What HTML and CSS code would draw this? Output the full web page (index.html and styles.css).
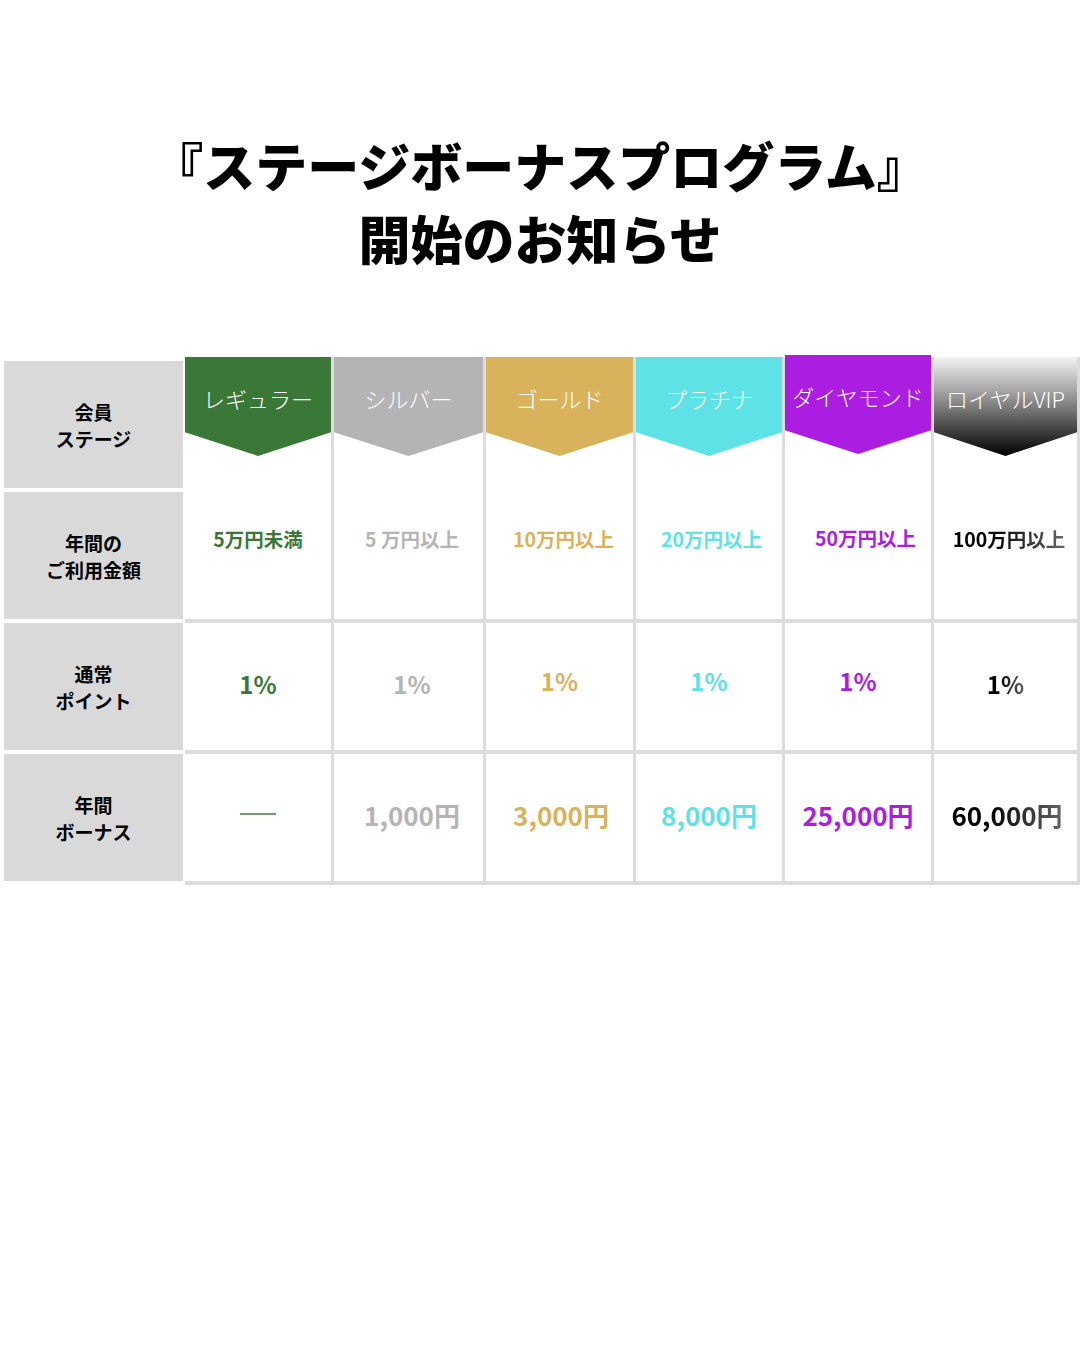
FILE: index.html
```html
<!DOCTYPE html>
<html lang="ja">
<head>
<meta charset="utf-8">
<title>ステージボーナスプログラム</title>
<link rel="stylesheet" href="styles.css">
</head>
<body>
<main class="page">
  <h1 class="title">『ステージボーナスプログラム』<br>開始のお知らせ</h1>
  <section class="table">
    <div class="labels">
      <div class="label">会員<br>ステージ</div>
      <div class="label">年間の<br>ご利用金額</div>
      <div class="label">通常<br>ポイント</div>
      <div class="label">年間<br>ボーナス</div>
    </div>
    <div class="col regular">
      <div class="head">
        <div class="banner">レギュラー</div>
        <div class="amount"><span>5万円未満</span></div>
      </div>
      <div class="cell pct"><span>1%</span></div>
      <div class="cell bonus"><span class="dash"></span></div>
    </div>
    <div class="col silver">
      <div class="head">
        <div class="banner">シルバー</div>
        <div class="amount"><span>5 万円以上</span></div>
      </div>
      <div class="cell pct"><span>1%</span></div>
      <div class="cell bonus"><span>1,000円</span></div>
    </div>
    <div class="col gold">
      <div class="head">
        <div class="banner">ゴールド</div>
        <div class="amount"><span>10万円以上</span></div>
      </div>
      <div class="cell pct"><span>1%</span></div>
      <div class="cell bonus"><span>3,000円</span></div>
    </div>
    <div class="col platinum">
      <div class="head">
        <div class="banner">プラチナ</div>
        <div class="amount"><span>20万円以上</span></div>
      </div>
      <div class="cell pct"><span>1%</span></div>
      <div class="cell bonus"><span>8,000円</span></div>
    </div>
    <div class="col diamond">
      <div class="head">
        <div class="banner">ダイヤモンド</div>
        <div class="amount"><span>50万円以上</span></div>
      </div>
      <div class="cell pct"><span>1%</span></div>
      <div class="cell bonus"><span>25,000円</span></div>
    </div>
    <div class="col vip">
      <div class="head">
        <div class="banner">ロイヤルVIP</div>
        <div class="amount"><span>100万円以上</span></div>
      </div>
      <div class="cell pct"><span>1%</span></div>
      <div class="cell bonus"><span>60,000円</span></div>
    </div>
  </section>
</main>
</body>
</html>
```
FILE: styles.css
```css
* {
  box-sizing: border-box;
}

html, body {
  margin: 0;
  padding: 0;
  background: #ffffff;
}

body {
  width: 1080px;
  height: 1350px;
  font-family: "Noto Sans CJK JP", "Noto Sans", sans-serif;
  color: #000;
}

.title {
  margin: 128px 0 0;
  text-align: center;
  font-size: 52px;
  line-height: 73px;
  font-weight: 900;
  letter-spacing: 0;
}

.table {
  display: flex;
  margin-top: 83px;
  padding-left: 4px;
  width: 1080px;
}

.labels {
  flex: none;
  width: 179px;
  margin-right: 2px;
  padding-top: 4px;
  display: flex;
  flex-direction: column;
  gap: 4px;
}

.label {
  height: 127px;
  background: #d9d9d9;
  display: flex;
  align-items: center;
  justify-content: center;
  text-align: center;
  font-size: 19px;
  font-weight: 700;
  line-height: 27px;
}

.col {
  flex: none;
  min-width: 0;
  border-right: 3px solid #dcdcdc;
  display: flex;
  flex-direction: column;
  color: var(--c);
}

.regular { width: 149px; }
.silver { width: 152px; }
.gold { width: 150px; }
.platinum { width: 149px; }
.diamond { width: 149px; }
.vip { width: 146px; }

.head {
  height: 266px;
  border-bottom: 4px solid #dcdcdc;
  display: flex;
  flex-direction: column;
}

.banner {
  flex: none;
  height: 99px;
  padding-top: 26px;
  background: var(--c);
  color: #fff;
  text-align: center;
  font-size: 22px;
  line-height: 30px;
  font-weight: 300;
  white-space: nowrap;
  clip-path: polygon(0 0, 100% 0, 100% 76%, 50% 100%, 0 76%);
}

.amount {
  flex: 1;
  display: flex;
  align-items: center;
  justify-content: center;
  padding-top: 1px;
  font-size: 19.5px;
  font-weight: 700;
  white-space: nowrap;
}

.cell {
  height: 131px;
  border-bottom: 4px solid #dcdcdc;
  display: flex;
  align-items: center;
  justify-content: center;
  font-weight: 700;
  white-space: nowrap;
}

.pct {
  font-size: 24px;
  padding-bottom: 7px;
}

.bonus {
  font-size: 26px;
  padding-bottom: 7px;
}

.dash {
  display: block;
  width: 36px;
  height: 2px;
  background: #6b9f69;
}

.regular { --c: #3a7838; }
.silver { --c: #b4b4b4; }
.gold { --c: #d9b25c; }
.platinum { --c: #5ee2e6; }
.diamond { --c: #ab1de0; }

.silver .amount { padding-left: 7px; }
.gold .amount { padding-left: 8px; }
.platinum .amount { padding-left: 5px; }
.diamond .amount { padding-left: 15px; }
.vip .amount { padding-left: 7px; }

.silver .cell { padding-left: 7px; }
.gold .bonus { padding-left: 3px; }
.vip .bonus { padding-left: 3px; }

.gold .pct span,
.platinum .pct span,
.diamond .pct span {
  margin-bottom: 5px;
}

.diamond .banner {
  margin-top: -2px;
}

.vip {
  --c: #000;
}

.vip .banner {
  background: linear-gradient(180deg, #f4f4f4 0%, #8a8a8a 45%, #000 100%);
}

.vip .amount span,
.vip .cell span {
  background: linear-gradient(90deg, #000 35%, #666 100%);
  -webkit-background-clip: text;
  background-clip: text;
  color: transparent;
}
```
